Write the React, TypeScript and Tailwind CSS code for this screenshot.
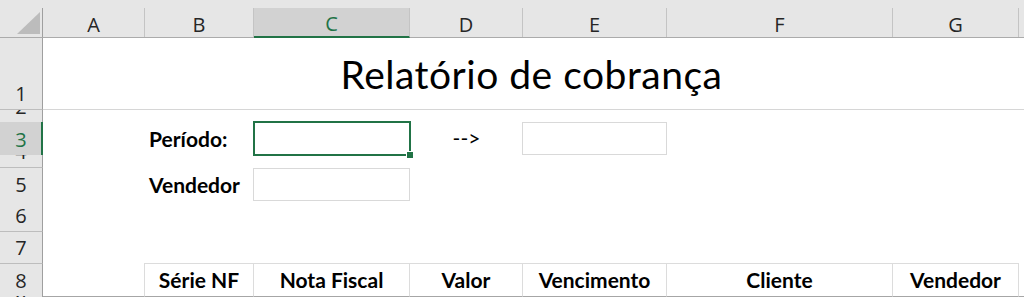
import React from 'react';

const grid = 'grid grid-cols-[43px_102px_109px_156px_113px_144px_226px_126px_1fr]';

function RowHead({
  n,
  active = false,
  className = '',
}: {
  n: number;
  active?: boolean;
  className?: string;
}) {
  return (
    <div
      className={`flex items-end justify-center overflow-hidden pb-[5px] font-['Open_Sans',sans-serif] text-[20px] leading-none ${
        active
          ? 'bg-[#d2d2d2] border-r-2 border-[#217346] text-[#217346] pl-px'
          : 'bg-[#e6e6e6] border-r border-r-[#9f9f9f] text-[#262626]'
      } ${className}`}
    >
      {n}
    </div>
  );
}

function ColHead({ label, active = false }: { label: string; active?: boolean }) {
  return (
    <div
      className={`mt-[8px] flex items-end justify-center pb-[2px] border-r border-r-[#c4c4c4] font-['Open_Sans',sans-serif] text-[20px] leading-none ${
        active
          ? 'bg-[#d2d2d2] border-b-2 border-b-[#217346] -mb-px text-[#217346]'
          : 'text-[#262626]'
      }`}
    >
      {label}
    </div>
  );
}

function Corner() {
  return (
    <svg width="43" height="37" viewBox="0 0 43 37">
      <polygon points="40,12 40,34 17,34" fill="#bcbcbc" />
      <line x1="42.5" y1="8" x2="42.5" y2="37" stroke="#9f9f9f" />
    </svg>
  );
}

function Label({ children }: { children: React.ReactNode }) {
  return (
    <div className="flex items-center pl-[4px] pt-[1px] font-bold text-[21px] whitespace-nowrap">
      {children}
    </div>
  );
}

function HeadCell({ children }: { children: React.ReactNode }) {
  return (
    <div className="flex items-center justify-center border-r border-r-[#dcdcdc] border-b border-b-[#a6a6a6] font-bold text-[21px] whitespace-nowrap">
      {children}
    </div>
  );
}

export default function App() {
  const cols = ['A', 'B', 'C', 'D', 'E', 'F', 'G'];

  return (
    <div className="w-[1024px] h-[297px] overflow-hidden bg-white text-black font-['Lato',sans-serif]">
      {/* column letters */}
      <div className={`${grid} h-[38px] bg-[#e6e6e6] border-b border-b-[#ababab]`}>
        <Corner />
        {cols.map((c) => (
          <ColHead key={c} label={c} active={c === 'C'} />
        ))}
        <div />
      </div>

      {/* row 1 */}
      <div className={`${grid} h-[72px]`}>
        <RowHead n={1} className="border-b border-b-[#bdbdbd]" />
        <div className="col-span-8 flex items-center justify-center pr-[4px] pt-[1px] border-b border-b-[#d6d6d6] text-[39px] tracking-[0.5px] whitespace-nowrap">
          Relatório de cobrança
        </div>
      </div>

      {/* row 2 */}
      <div className={`${grid} h-[12px]`}>
        <RowHead n={2} />
        <div className="col-span-8" />
      </div>

      {/* row 3 */}
      <div className={`${grid} h-[33px]`}>
        <RowHead n={3} active />
        <div />
        <Label>Período:</Label>
        <div className="relative">
          <div className="absolute -left-px -top-px -right-px -bottom-px border-2 border-[#217346]" />
          <div className="absolute -right-[3px] -bottom-[3px] w-[6px] h-[6px] bg-[#217346] outline outline-1 outline-white" />
        </div>
        <div className="flex items-center justify-center pb-[1px] text-[21px]">--&gt;</div>
        <div className="border border-[#d9d9d9] -ml-px" />
        <div />
        <div />
        <div />
      </div>

      {/* row 4 */}
      <div className={`${grid} h-[13px]`}>
        <RowHead n={4} className="border-b border-b-[#bdbdbd]" />
        <div className="col-span-8" />
      </div>

      {/* row 5 */}
      <div className={`${grid} h-[32px]`}>
        <RowHead n={5} className="border-b border-b-[#bdbdbd]" />
        <div />
        <Label>Vendedor</Label>
        <div className="border border-[#d9d9d9] -ml-px" />
        <div className="col-span-5" />
      </div>

      {/* row 6 */}
      <div className={`${grid} h-[32px]`}>
        <RowHead n={6} className="border-b border-b-[#bdbdbd]" />
        <div className="col-span-8" />
      </div>

      {/* row 7 */}
      <div className={`${grid} h-[32px]`}>
        <RowHead n={7} className="border-b border-b-[#bdbdbd]" />
        <div />
        <div className="col-span-6 border-b border-b-[#dcdcdc] -ml-px" />
        <div />
      </div>

      {/* row 8 */}
      <div className={`${grid} h-[32px]`}>
        <RowHead n={8} className="border-b border-b-[#a6a6a6]" />
        <div className="border-r border-r-[#dcdcdc] border-b border-b-[#a6a6a6]" />
        <HeadCell>Série NF</HeadCell>
        <HeadCell>Nota Fiscal</HeadCell>
        <HeadCell>Valor</HeadCell>
        <HeadCell>Vencimento</HeadCell>
        <HeadCell>Cliente</HeadCell>
        <HeadCell>Vendedor</HeadCell>
        <div className="border-b border-b-[#a6a6a6]" />
      </div>

      {/* row 9 */}
      <div className={`${grid} h-[20px]`}>
        <RowHead n={9} />
        <div className="col-span-8" />
      </div>
    </div>
  );
}
